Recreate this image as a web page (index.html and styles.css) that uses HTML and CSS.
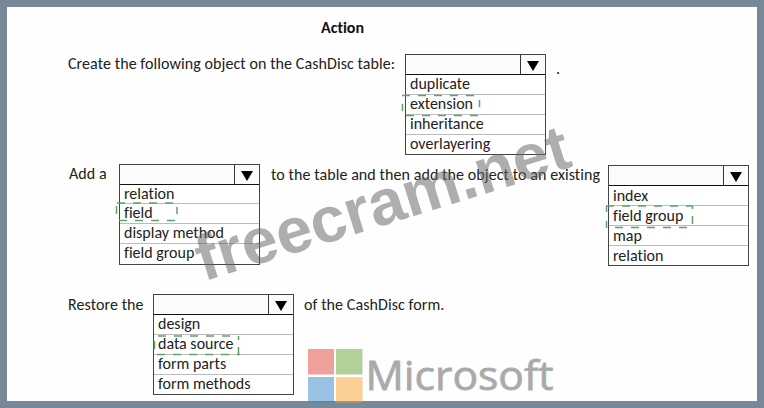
FILE: index.html
```
<!DOCTYPE html>
<html lang="en">

<head>
    <meta charset="utf-8">
    <title>Action</title>
    <link rel="stylesheet" href="styles.css">
</head>

<body>
    <main class="sheet">
        <h1>Action</h1>

        <section class="row row-create">
            <p class="label create">Create the following object on the CashDisc table:</p>
            <div class="select">
                <div class="head"><span class="arrow"></span></div>
                <ul>
                    <li>duplicate</li>
                    <li>extension</li>
                    <li>inheritance</li>
                    <li>overlayering</li>
                </ul>
                <svg class="mark" width="141" height="101">
                    <path d="M-3 41.5H74M1 61.5H74" stroke-dasharray="8 8" />
                    <path d="M-2.5 50v7M74.5 46v7" />
                </svg>
            </div>
            <p class="label stop">.</p>
        </section>

        <section class="row row-add">
            <p class="label add">Add a</p>
            <div class="select left">
                <div class="head"><span class="arrow"></span></div>
                <ul>
                    <li>relation</li>
                    <li>field</li>
                    <li>display method</li>
                    <li>field group</li>
                </ul>
                <svg class="mark" width="141" height="101">
                    <path d="M-2 39H54M0 56.5H56" stroke-dasharray="8 8" />
                    <path d="M-2.5 42v8M58 43v7" />
                </svg>
            </div>
            <p class="label table">to the table and then add the object to an existing</p>
            <div class="select right">
                <div class="head"><span class="arrow"></span></div>
                <ul>
                    <li>index</li>
                    <li>field group</li>
                    <li>map</li>
                    <li>relation</li>
                </ul>
                <svg class="mark" width="141" height="101">
                    <path d="M-2 41H85M7 62.5H80" stroke-dasharray="8 8" />
                    <path d="M-1.5 41v6M-1.5 56v7M84.5 41v3M84.5 51v8" />
                </svg>
            </div>
        </section>

        <section class="row row-restore">
            <p class="label restore">Restore the</p>
            <div class="select">
                <div class="head"><span class="arrow"></span></div>
                <ul>
                    <li>design</li>
                    <li>data source</li>
                    <li>form parts</li>
                    <li>form methods</li>
                </ul>
                <svg class="mark" width="141" height="101">
                    <path d="M5 42H85M4 60.5H87" stroke-dasharray="8 8" />
                    <path d="M1.5 47v8M85.5 42v4M85.5 53v7" />
                </svg>
            </div>
            <p class="label form">of the CashDisc form.</p>
        </section>
    </main>

    <svg class="watermark" width="764" height="408">
        <text class="site" transform="translate(203.5 281.5) rotate(-17.3)" textLength="388" lengthAdjust="spacingAndGlyphs">freecram.net</text>
    </svg>

    <svg class="brand" width="270" height="60" viewBox="0 0 270 60">
        <rect x="0" y="1" width="26" height="25.5" fill="#e2453a" />
        <rect x="28" y="1" width="26.5" height="25.5" fill="#69a534" />
        <rect x="0" y="29" width="26" height="25.5" fill="#3a88cc" />
        <rect x="28" y="29" width="26.5" height="25.5" fill="#fba131" />
        <text x="57.5" y="41.5" textLength="188" lengthAdjust="spacingAndGlyphs">Microsoft</text>
    </svg>
</body>

</html>
```
FILE: styles.css
```
* {
    box-sizing: border-box;
}

body {
    margin: 0;
    font-family: Carlito, Lato, sans-serif;
    font-size: 16px;
    font-variant-ligatures: none;
    color: #222;
}

.sheet {
    width: 764px;
    height: 408px;
    border: 7px solid #778899;
    background: #fefefe;
    overflow: hidden;
}

h1 {
    margin: 11px 0 0;
    padding-left: 314px;
    height: 36px;
    font-size: 16px;
    line-height: 20px;
    color: #111;
}

.row {
    display: flex;
    align-items: flex-start;
    padding-left: 61px;
}

.row-create {
    height: 110px;
}

.row-add {
    height: 130px;
}

.label {
    margin: 0;
    line-height: 20px;
    letter-spacing: .08px;
    white-space: nowrap;
}

.create {
    width: 337px;
}

.stop {
    padding-left: 10px;
    padding-top: 5px;
}

.add {
    width: 51px;
    padding-left: 1px;
}

.table {
    width: 348px;
    padding-left: 11px;
    padding-top: 1px;
}

.restore {
    width: 85px;
    padding-top: 1px;
}

.form {
    padding-left: 10px;
    padding-top: 1px;
}

.select {
    position: relative;
    width: 141px;
    height: 101px;
    flex-shrink: 0;
    border: 1px solid #444;
    background: #fff;
}

.right {
    margin-top: 1px;
}

.head {
    display: flex;
    justify-content: flex-end;
    height: 20px;
    border-bottom: 1px solid #111;
    background: #fbfbfb;
}

.arrow {
    display: flex;
    align-items: center;
    justify-content: center;
    width: 25px;
    border-left: 1px solid #333;
}

.arrow::before {
    content: "";
    margin-top: 2px;
    border: solid transparent;
    border-width: 10px 6.5px 0;
    border-top-color: #000;
}

ul {
    margin: 0;
    padding: 0;
    list-style: none;
}

li {
    height: 20px;
    padding-left: 4px;
    line-height: 18px;
    border-bottom: 1px solid #bbb;
}

li:last-child {
    border-bottom: 0;
}

.left li {
    line-height: 17px;
}

.left li:first-child {
    height: 19px;
}

.right li {
    line-height: 20px;
}

.mark {
    position: absolute;
    top: -1px;
    left: -1px;
    overflow: visible;
    fill: none;
    stroke: #5da46b;
    stroke-width: 1.5;
}

.watermark {
    position: absolute;
    top: 0;
    left: 0;
}

.site {
    font: bold 64px "Liberation Sans", sans-serif;
    fill: #666;
    fill-opacity: .53;
}

.brand {
    position: absolute;
    left: 308px;
    top: 348px;
    opacity: .5;
    overflow: visible;
    font: 400 40px "Open Sans", sans-serif;
    fill: #58595b;
}

.brand text {
    stroke: #58595b;
    stroke-width: .8;
}
```
